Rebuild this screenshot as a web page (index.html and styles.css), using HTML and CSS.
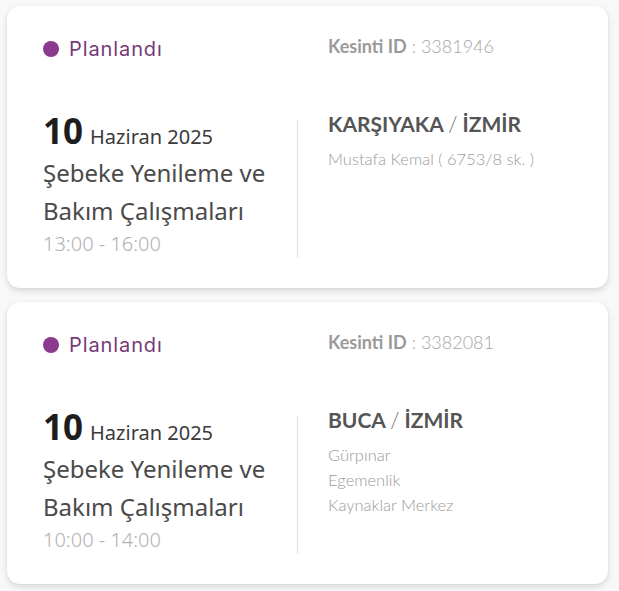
FILE: index.html
```html
<!DOCTYPE html>
<html lang="tr">
<head>
<meta charset="utf-8">
<title>Planlı Kesintiler</title>
<link rel="stylesheet" href="styles.css">
</head>
<body>
<main class="list">
  <article class="card">
    <div class="status"><span class="dot"></span><span class="status-text">Planlandı</span></div>
    <div class="outage-id"><b>Kesinti ID</b> : 3381946</div>
    <div class="when">
      <div class="date"><span class="day">10</span><span class="month">Haziran 2025</span></div>
      <div class="title">Şebeke Yenileme ve<br>Bakım Çalışmaları</div>
      <div class="time">13:00 - 16:00</div>
    </div>
    <div class="divider"></div>
    <div class="where">
      <div class="place">KARŞIYAKA <span class="slash">/</span> İZMİR</div>
      <ul class="streets">
        <li>Mustafa Kemal ( 6753/8 sk. )</li>
      </ul>
    </div>
  </article>
  <article class="card">
    <div class="status"><span class="dot"></span><span class="status-text">Planlandı</span></div>
    <div class="outage-id"><b>Kesinti ID</b> : 3382081</div>
    <div class="when">
      <div class="date"><span class="day">10</span><span class="month">Haziran 2025</span></div>
      <div class="title">Şebeke Yenileme ve<br>Bakım Çalışmaları</div>
      <div class="time">10:00 - 14:00</div>
    </div>
    <div class="divider"></div>
    <div class="where">
      <div class="place">BUCA <span class="slash">/</span> İZMİR</div>
      <ul class="streets">
        <li>Gürpınar</li>
        <li>Egemenlik</li>
        <li>Kaynaklar Merkez</li>
      </ul>
    </div>
  </article>
</main>
</body>
</html>
```
FILE: styles.css
```css
html, body {
  margin: 0;
  padding: 0;
  background: #f8f8f8;
}
body {
  padding: 6px 11px 6px 7px;
  font-family: "Lato", "Noto Sans", sans-serif;
}
.list {
  display: flex;
  flex-direction: column;
  gap: 14px;
}
.card {
  background: #ffffff;
  border-radius: 13px;
  box-shadow: 0 3px 6px rgba(0, 0, 0, 0.13), 0 0 2px rgba(0, 0, 0, 0.05);
  padding: 31px 36px 30px 36px;
  display: grid;
  grid-template-columns: 254px 1px 1fr;
  grid-template-rows: auto auto;
  row-gap: 50px;
}
.status {
  grid-column: 1;
  grid-row: 1;
  display: flex;
  align-items: center;
  gap: 10px;
  height: 24px;
}
.dot {
  width: 16px;
  height: 16px;
  border-radius: 50%;
  background: #8a3b8d;
  flex: none;
}
.status-text {
  font-family: "Inter", "Lato", sans-serif;
  font-size: 20px;
  line-height: 24px;
  letter-spacing: 0.9px;
  color: #763a7a;
}
.outage-id {
  grid-column: 3;
  grid-row: 1;
  padding-left: 30px;
  font-size: 18px;
  line-height: 24px;
  color: #a6a6a6;
  font-weight: 300;
  margin-top: -3px;
}
.outage-id b {
  font-weight: 700;
  color: #9a9a9a;
}
.when {
  grid-column: 1;
  grid-row: 2;
  font-family: "Noto Sans", "Open Sans", sans-serif;
}
.date {
  font-size: 35px;
  line-height: 40px;
  white-space: nowrap;
}
.day {
  font-weight: 700;
  color: #1d1d1d;
}
.month {
  margin-left: 7px;
  font-size: 20px;
  line-height: 20px;
  color: #3a3a3a;
}
.title {
  margin-top: 3px;
  font-size: 24px;
  line-height: 38px;
  color: #4a4a4a;
  white-space: nowrap;
}
.time {
  font-size: 20px;
  line-height: 28px;
  font-weight: 300;
  color: #b1b1b1;
}
.divider {
  grid-column: 2;
  grid-row: 2;
  background: #e0e0e0;
  margin-top: 9px;
}
.where {
  grid-column: 3;
  grid-row: 2;
  padding-left: 30px;
}
.place {
  font-size: 21px;
  line-height: 26px;
  font-weight: 700;
  color: #555555;
  white-space: nowrap;
}
.slash {
  font-weight: 300;
  color: #666666;
}
.streets {
  list-style: none;
  margin: 10px 0 0 0;
  padding: 0;
}
.streets li {
  font-size: 16.5px;
  line-height: 25px;
  font-weight: 300;
  color: #9a9a9a;
}
```
